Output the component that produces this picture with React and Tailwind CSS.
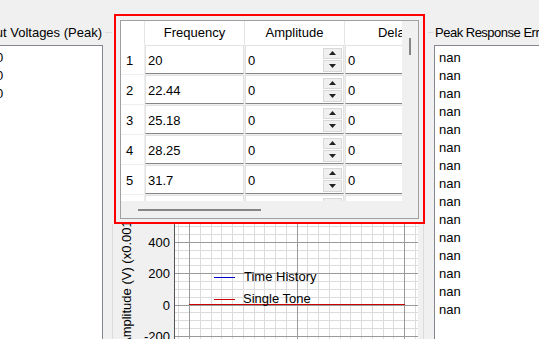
const rows = [
  ["1", "20"],
  ["2", "22.44"],
  ["3", "25.18"],
  ["4", "28.25"],
  ["5", "31.7"],
  ["6", "35.57"],
];

const errors = Array.from({ length: 15 }, () => "nan");

const Arrow = ({ up }) => (
  <svg width="7" height="4" viewBox="0 0 7 4">
    <path d={up ? "M3.5 0L7 4H0z" : "M0 0h7L3.5 4z"} fill="#222" />
  </svg>
);

const SpinButtons = () => (
  <div className="w-[19px] h-[24px] mr-px flex flex-col gap-px shrink-0">
    <div className="flex-1 bg-[#f0f0f0] border border-[#d9d9d9] flex items-center justify-center">
      <Arrow up />
    </div>
    <div className="flex-1 bg-[#f0f0f0] border border-[#d9d9d9] flex items-center justify-center">
      <Arrow />
    </div>
  </div>
);

const Cell = ({ value, spin }) => (
  <div className="w-[100px] h-full shrink-0 border-r border-[#eeeeee]">
    <div className="h-full border border-[#e2e2e2] border-b-[#858585] flex items-center pl-[2px]">
      <span className="flex-1 pt-[2px] whitespace-nowrap">{value}</span>
      {spin && <SpinButtons />}
    </div>
  </div>
);

const HeaderCell = ({ label }) => (
  <div className="w-[100px] h-full shrink-0 border-r border-[#e5e5e5] flex items-center justify-center whitespace-nowrap">
    {label}
  </div>
);

const ParamTable = () => (
  <div className="w-[299px] h-[199px] border border-[#a0a0a0] bg-white flex flex-col">
    <div className="flex h-[180px]">
      <div className="w-[281px] h-full overflow-hidden">
        <div className="w-[324px]">
          <div className="flex h-[24px]">
            <div className="w-[24px] shrink-0 border-r border-[#e5e5e5]" />
            <HeaderCell label="Frequency" />
            <HeaderCell label="Amplitude" />
            <HeaderCell label="Delay" />
          </div>
          {rows.map(([n, f]) => (
            <div key={n} className="flex h-[30px] border-b border-[#eeeeee]">
              <div className="w-[24px] shrink-0 border-r border-[#eeeeee] flex items-center pl-[5px] pt-[2px]">
                {n}
              </div>
              <Cell value={f} />
              <Cell value="0" spin />
              <Cell value="0" />
            </div>
          ))}
        </div>
      </div>
      <div className="w-[16px] h-full bg-[#f0f0f0] pt-[17px] pl-[7px]">
        <div className="w-[2px] h-[17px] bg-[#868686]" />
      </div>
    </div>
    <div className="h-[17px] bg-[#f0f0f0] pt-[8px] pl-[17px]">
      <div className="w-[123px] h-[2px] bg-[#868686]" />
    </div>
  </div>
);

const Chart = () => {
  const vLines = [];
  for (let i = -1; i < 23; i++) {
    const x = Math.round(76 + i * 10.75) + 0.5;
    if (x > 61 && x < 305) vLines.push({ x, major: i % 10 === 0 });
  }
  const hLines = [];
  for (let j = -2; j < 16; j++) {
    const y = Math.round(18 + j * 7.8125) + 0.5;
    if (y > 0) hLines.push({ y, major: j % 4 === 0 });
  }
  const ticks = [
    ["400", 22.5],
    ["200", 54],
    ["0", 85.5],
    ["-200", 116.5],
  ];
  return (
    <svg width="310" height="130" className="block">
      <g fontFamily="Liberation Sans, Arial, sans-serif" fontSize="13" fill="#000">
        <text x="18" y="57" textAnchor="middle" transform="rotate(-90 18 57)">
          Amplitude (V) (x0.001)
        </text>
        {ticks.map(([t, y]) => (
          <text key={t} x="57" y={y} textAnchor="end">
            {t}
          </text>
        ))}
      </g>
      <rect x="61" y="0" width="244" height="130" fill="#fff" />
      {vLines
        .filter((l) => !l.major)
        .map((l) => (
          <line key={"v" + l.x} x1={l.x} x2={l.x} y1="0" y2="130" stroke="#dcdcdc" />
        ))}
      {hLines
        .filter((l) => !l.major)
        .map((l) => (
          <line key={"h" + l.y} x1="61" x2="305" y1={l.y} y2={l.y} stroke="#dcdcdc" />
        ))}
      {vLines
        .filter((l) => l.major)
        .map((l) => (
          <line key={"V" + l.x} x1={l.x} x2={l.x} y1="0" y2="130" stroke="#9a9a9a" />
        ))}
      {hLines
        .filter((l) => l.major)
        .map((l) => (
          <line key={"H" + l.y} x1="61" x2="305" y1={l.y} y2={l.y} stroke="#9a9a9a" />
        ))}
      <line x1="61.5" x2="61.5" y1="0" y2="130" stroke="#555" />
      <line x1="76" x2="292" y1="80.5" y2="80.5" stroke="#cc0000" />
      <line x1="101" x2="122" y1="53.5" y2="53.5" stroke="#0000cc" />
      <line x1="101" x2="122" y1="75.5" y2="75.5" stroke="#cc0000" />
      <g fontFamily="Liberation Sans, Arial, sans-serif" fontSize="13" fill="#000">
        <text x="131" y="57">Time History</text>
        <text x="130" y="78.5">Single Tone</text>
      </g>
    </svg>
  );
};

const App = () => {
  return (
    <div className="w-[539px] h-[339px] overflow-hidden bg-[#f0f0f0] flex text-[13px] text-black font-['Liberation_Sans',Arial,sans-serif]">
      {/* left group: output voltages */}
      <div className="w-[112px] shrink-0 flex flex-col">
        <div className="h-[45px] pt-[20px] flex items-center">
          <div className="w-[102px] h-[16px] leading-[16px] overflow-hidden flex justify-end">
            <span className="whitespace-nowrap">Output Voltages (Peak)</span>
          </div>
          <div className="flex-1 h-px bg-[#dcdcdc] ml-[3px]" />
        </div>
        <div className="w-[103px] flex-1 bg-white border-t border-r border-[#828790] pt-[3px] overflow-hidden">
          {["0", "0", "0"].map((v, i) => (
            <div key={i} className="leading-[18px] -ml-[4px]">
              {v}
            </div>
          ))}
        </div>
      </div>

      {/* middle: parameter table + chart */}
      <div className="w-[316px] shrink-0 flex flex-col">
        <div className="mt-[14px] ml-[2px] w-[311px] border-2 border-[#ff0000] pt-[4px] pb-[3px] px-[4px]">
          <ParamTable />
        </div>
        <div className="w-[312px] flex-1 border-l border-r border-[#dcdcdc] overflow-hidden">
          <Chart />
        </div>
      </div>

      {/* right group: peak response error */}
      <div className="flex-1 min-w-0 flex flex-col">
        <div className="h-[45px] pt-[20px] flex items-center">
          <div className="w-[5px] h-px bg-[#dcdcdc] mr-[2px] shrink-0" />
          <span className="whitespace-nowrap h-[16px] leading-[16px] tracking-[-0.5px]">
            Peak Response Error (%)
          </span>
        </div>
        <div className="ml-[6px] flex-1 bg-white border-t border-l border-[#828790] pt-[3px] pl-[4px] overflow-hidden">
          {errors.map((v, i) => (
            <div key={i} className="leading-[18px]">
              {v}
            </div>
          ))}
        </div>
      </div>
    </div>
  );
};

export default App;
